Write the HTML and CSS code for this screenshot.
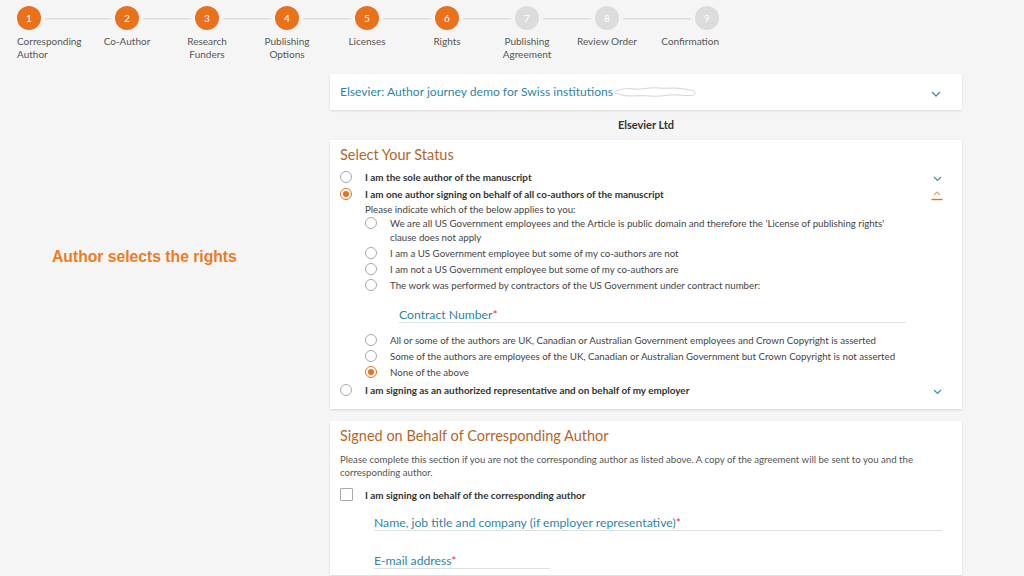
FILE: index.html
```html
<!DOCTYPE html>
<html lang="en">
<head>
<meta charset="utf-8">
<title>Rights</title>
<link rel="stylesheet" href="styles.css">
</head>
<body>
<div class="page">
  <header class="stepper">
    <ol class="steps">
      <li class="step done first"><span class="dot">1</span><span class="lbl">Corresponding<br>Author</span></li>
      <li class="step done"><span class="dot">2</span><span class="lbl">Co-Author</span></li>
      <li class="step done"><span class="dot">3</span><span class="lbl">Research<br>Funders</span></li>
      <li class="step done"><span class="dot">4</span><span class="lbl">Publishing<br>Options</span></li>
      <li class="step done"><span class="dot">5</span><span class="lbl">Licenses</span></li>
      <li class="step done"><span class="dot">6</span><span class="lbl">Rights</span></li>
      <li class="step todo"><span class="dot">7</span><span class="lbl">Publishing<br>Agreement</span></li>
      <li class="step todo"><span class="dot">8</span><span class="lbl">Review Order</span></li>
      <li class="step todo last"><span class="dot">9</span><span class="lbl">Confirmation</span></li>
    </ol>
  </header>
  <div class="content">
    <aside class="side">
      <p class="caption">Author selects the rights</p>
    </aside>
    <main class="main">
      <section class="card journal">
        <span class="journal-title">Elsevier: Author journey demo for Swiss institutions<svg class="blob" width="82" height="14" viewBox="0 0 82 14"><path d="M1 7 C 6 4, 12 3, 20 4 S 34 2, 44 3 S 60 2, 70 4 S 80 5, 81 8 S 74 11, 64 10 S 50 12, 36 11 S 14 12, 8 10 S 0 9, 1 7Z" fill="#fff" stroke="#c8c8c8" stroke-width="0.8"/></svg></span>
        <svg class="chev chev-lg" width="10" height="6" viewBox="0 0 10 6"><path d="M1 1 L5 5 L9 1" fill="none" stroke="#3f8fae" stroke-width="1.3"/></svg>
      </section>
      <p class="publisher">Elsevier Ltd</p>
      <section class="card status">
        <h2 class="card-title">Select Your Status</h2>
        <div class="row">
          <span class="radio"></span>
          <span class="row-text">I am the sole author of the manuscript</span>
          <svg class="chev" width="9" height="6" viewBox="0 0 9 6"><path d="M1 1 L4.5 4.5 L8 1" fill="none" stroke="#3f8fae" stroke-width="1.2"/></svg>
        </div>
        <div class="row">
          <span class="radio on"></span>
          <span class="row-text">I am one author signing on behalf of all co-authors of the manuscript</span>
          <svg class="chev chev-up" width="12" height="12" viewBox="0 0 12 12"><path d="M3 6 L6 3 L9 6" fill="none" stroke="#f0a060" stroke-width="1.2"/><path d="M0.5 10.5 H11.5" stroke="#e9711c" stroke-width="1.4"/></svg>
        </div>
        <div class="sub">
          <p class="sub-intro">Please indicate which of the below applies to you:</p>
          <div class="sub-row"><span class="radio"></span><span class="sub-text">We are all US Government employees and the Article is public domain and therefore the 'License of publishing rights'<br>clause does not apply</span></div>
          <div class="sub-row"><span class="radio"></span><span class="sub-text">I am a US Government employee but some of my co-authors are not</span></div>
          <div class="sub-row"><span class="radio"></span><span class="sub-text">I am not a US Government employee but some of my co-authors are</span></div>
          <div class="sub-row"><span class="radio"></span><span class="sub-text">The work was performed by contractors of the US Government under contract number:</span></div>
          <div class="field contract"><span class="field-label">Contract Number<span class="req">*</span></span></div>
          <div class="sub-row"><span class="radio"></span><span class="sub-text">All or some of the authors are UK, Canadian or Australian Government employees and Crown Copyright is asserted</span></div>
          <div class="sub-row"><span class="radio"></span><span class="sub-text">Some of the authors are employees of the UK, Canadian or Australian Government but Crown Copyright is not asserted</span></div>
          <div class="sub-row"><span class="radio on"></span><span class="sub-text">None of the above</span></div>
        </div>
        <div class="row">
          <span class="radio"></span>
          <span class="row-text">I am signing as an authorized representative and on behalf of my employer</span>
          <svg class="chev" width="9" height="6" viewBox="0 0 9 6"><path d="M1 1 L4.5 4.5 L8 1" fill="none" stroke="#3f8fae" stroke-width="1.2"/></svg>
        </div>
      </section>
      <section class="card behalf">
        <h2 class="card-title">Signed on Behalf of Corresponding Author</h2>
        <p class="note">Please complete this section if you are not the corresponding author as listed above. A copy of the agreement will be sent to you and the<br>corresponding author.</p>
        <div class="row check-row">
          <span class="checkbox"></span>
          <span class="row-text">I am signing on behalf of the corresponding author</span>
        </div>
        <div class="field wide"><span class="field-label">Name, job title and company (if employer representative)<span class="req">*</span></span></div>
        <div class="field short"><span class="field-label">E-mail address<span class="req">*</span></span></div>
      </section>
    </main>
  </div>
</div>
</body>
</html>
```

FILE: styles.css
```css
* { box-sizing: border-box; }
html, body { margin: 0; padding: 0; }
body {
  background: #f5f5f5;
  font-family: Lato, "Open Sans", sans-serif;
  color: #333;
  width: 1024px;
  height: 576px;
  overflow: hidden;
}
.stepper {
  height: 74px;
  padding: 6px 0 0 17px;
}
.steps {
  list-style: none;
  margin: 0;
  padding: 0;
  display: flex;
  width: 702px;
  background: linear-gradient(#dedede, #dedede) no-repeat;
  background-size: 678px 1.5px;
  background-position: 12px 11.5px;
}
.step {
  width: 80px;
  display: flex;
  flex-direction: column;
  align-items: center;
  text-align: center;
}
.step.first { width: 70px; align-items: flex-start; text-align: left; }
.step.last { width: 72px; align-items: flex-end; text-align: right; }
.dot {
  width: 24px;
  height: 24px;
  border-radius: 50%;
  display: flex;
  align-items: center;
  justify-content: center;
  font-size: 10px;
  color: #fff;
  box-shadow: 0 0 0 4px #f5f5f5;
}
.done .dot { background: #e9711c; }
.todo .dot { background: #dcdcdc; }
.lbl {
  margin-top: 4.5px;
  font-size: 10px;
  line-height: 13px;
  color: #555;
}
.content { display: flex; }
.side { width: 330px; padding: 173px 0 0 52px; }
.caption {
  margin: 0;
  font-family: "Liberation Sans", Arial, sans-serif;
  font-weight: bold;
  font-size: 15.7px;
  line-height: 20px;
  color: #f07b1e;
}
.main { width: 632px; }
.card {
  background: #fff;
  box-shadow: 0 1px 2px rgba(0,0,0,0.12);
  padding: 6px 10px 11px 10px;
}
.journal {
  height: 36px;
  padding: 0 11px 0 10px;
  display: flex;
  align-items: center;
  justify-content: space-between;
}
.journal-title {
  font-size: 12.1px;
  color: #2f85a5;
  display: flex;
  align-items: center;
  margin-top: -2px;
}
.blob { margin-left: 1px; margin-top: 2px; }
.chev-lg { margin-top: 4px; }
.publisher {
  margin: 0;
  height: 30px;
  line-height: 30px;
  text-align: center;
  font-size: 11px;
  font-weight: bold;
  color: #333;
}
.card-title {
  margin: 0 0 4px 0;
  font-size: 14.5px;
  line-height: 18px;
  font-weight: normal;
  color: #b4662a;
}
.row {
  display: flex;
  align-items: center;
  height: 17px;
}
.row-text {
  flex: 1;
  font-size: 9.9px;
  font-weight: bold;
  color: #333;
}
.radio {
  width: 12px;
  height: 12px;
  border-radius: 50%;
  border: 1px solid #a8a8a8;
  margin-right: 13px;
  flex-shrink: 0;
  display: flex;
  align-items: center;
  justify-content: center;
  background: #fff;
}
.radio.on { border-color: #e9711c; }
.radio.on::after {
  content: "";
  width: 6px;
  height: 6px;
  border-radius: 50%;
  background: #e9711c;
}
.row .radio { margin-left: 0; margin-right: 13px; }
.chev { margin-right: 10px; margin-top: 4px; }
.chev-up { margin-right: 9px; margin-top: 2px; }
.sub { margin-left: 25px; }
.sub-intro {
  margin: 0;
  font-size: 9.7px;
  line-height: 14px;
  color: #444;
}
.sub-row {
  display: flex;
  align-items: flex-start;
  margin-bottom: 2px;
}
.sub-row .radio { margin-top: 1px; }
.sub-text {
  font-size: 9.7px;
  line-height: 14px;
  color: #444;
}
.field {
  border-bottom: 1.5px solid #e0e0e0;
  height: 16px;
  display: flex;
  align-items: center;
}
.field-label {
  font-size: 12.2px;
  color: #2f85a5;
  line-height: 16px;
}
.req { color: #e5305a; }
.contract {
  width: 507px;
  margin: 15px 0 10px 34px;
}
.note {
  margin: 8px 0 0 0;
  font-size: 9.65px;
  line-height: 13px;
  color: #555;
}
.check-row { margin-top: 7px; }
.checkbox {
  width: 13px;
  height: 13px;
  border: 1px solid #aaa;
  border-radius: 1px;
  margin-right: 12px;
  flex-shrink: 0;
}
.field.wide { margin: 12px 10px 0 34px; }
.field.short { width: 176px; margin: 22px 0 0 34px; }
.behalf { margin-top: 12px; height: 154px; }
```
